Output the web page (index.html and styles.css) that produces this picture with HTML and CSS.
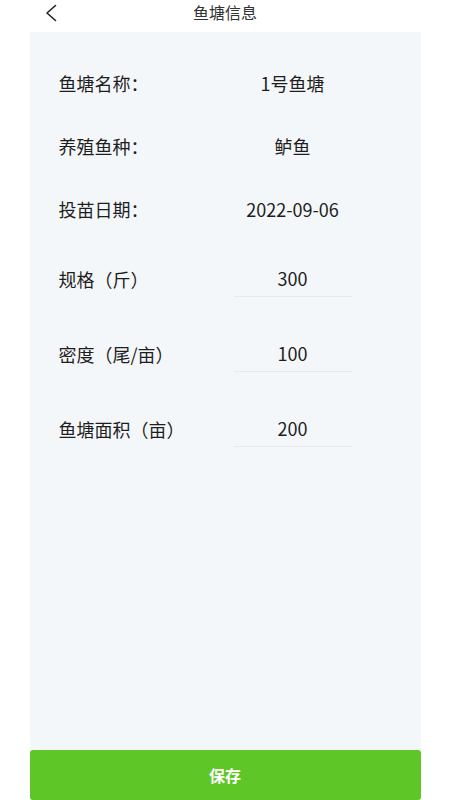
FILE: index.html
```html
<!DOCTYPE html>
<html lang="zh-CN">
<head>
<meta charset="utf-8">
<meta name="viewport" content="width=450">
<title>鱼塘信息</title>
<link rel="stylesheet" href="styles.css">
</head>
<body>
<div class="page">
  <header class="topbar">
    <span class="back">
      <svg width="12" height="18" viewBox="0 0 12 18"><polyline points="10.5,1.5 2,9 10.5,16.5" fill="none" stroke="#222" stroke-width="1.6" stroke-linecap="round" stroke-linejoin="round"/></svg>
    </span>
    <h1 class="title">鱼塘信息</h1>
  </header>
  <main class="panel">
    <div class="row">
      <span class="label">鱼塘名称：</span>
      <span class="value">1号鱼塘</span>
    </div>
    <div class="row">
      <span class="label">养殖鱼种：</span>
      <span class="value">鲈鱼</span>
    </div>
    <div class="row">
      <span class="label">投苗日期：</span>
      <span class="value">2022-09-06</span>
    </div>
    <div class="irow first">
      <span class="label">规格（斤）</span>
      <span class="field">300</span>
    </div>
    <div class="irow">
      <span class="label">密度（尾/亩）</span>
      <span class="field">100</span>
    </div>
    <div class="irow">
      <span class="label">鱼塘面积（亩）</span>
      <span class="field">200</span>
    </div>
  </main>
  <button class="save">保存</button>
</div>
</body>
</html>
```
FILE: styles.css
```css
html, body {
  margin: 0;
  padding: 0;
  background: #ffffff;
}
body {
  font-family: "Noto Sans CJK SC", "Noto Sans", sans-serif;
  color: #1e1e1e;
}
.page {
  width: 450px;
  height: 800px;
  display: flex;
  flex-direction: column;
  align-items: center;
  overflow: hidden;
}
.topbar {
  width: 100%;
  height: 32px;
  position: relative;
  display: flex;
  justify-content: center;
}
.back {
  position: absolute;
  left: 45px;
  top: 4px;
  width: 12px;
  height: 18px;
}
.back svg { display: block; }
.title {
  margin: 0;
  font-size: 16px;
  font-weight: normal;
  line-height: 24px;
  color: #333;
}
.panel {
  width: 391px;
  height: 718px;
  box-sizing: border-box;
  background: #f4f7f9;
  padding: 19px 0 0 29px;
  display: flex;
  flex-direction: column;
}
.row, .irow {
  display: flex;
  align-items: center;
  font-size: 18px;
}
.row {
  height: 63px;
}
.irow {
  margin-bottom: 38px;
}
.irow.first {
  margin-top: 20px;
}
.label {
  width: 175px;
  flex: none;
}
.value {
  width: 118px;
  text-align: center;
}
.field {
  width: 118px;
  height: 36px;
  line-height: 36px;
  text-align: center;
  border-bottom: 1px solid #e6eaec;
}
.save {
  width: 391px;
  height: 50px;
  flex: none;
  border: none;
  border-radius: 3px;
  background: #5ec626;
  color: #fff;
  font-family: "Noto Sans CJK SC", sans-serif;
  font-size: 16px;
  font-weight: bold;
  padding: 0;
}
```
